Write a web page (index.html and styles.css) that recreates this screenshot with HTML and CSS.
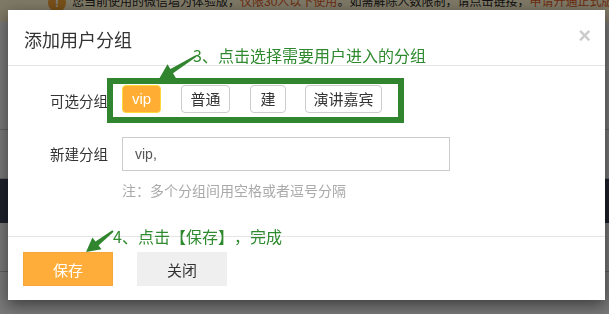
FILE: index.html
```html
<!DOCTYPE html>
<html lang="zh-CN">
<head>
    <meta charset="UTF-8">
    <meta name="viewport" content="width=device-width, initial-scale=1.0">
    <title>添加用户分组</title>
    <link rel="stylesheet" href="styles.css">
</head>
<body>
    <!-- Page behind the dialog -->
    <div class="page">
        <div class="notice">
            <span class="notice-icon">!</span>您当前使用的微信墙为体验版，<span class="red">仅限30人以下使用</span>。如需解除人数限制，请点击链接，<span class="red">申请开通正式版</span>
        </div>
        <div class="page-row"></div>
        <div class="page-row tall"></div>
        <div class="page-nav"></div>
        <div class="page-row low"></div>
    </div>

    <!-- Add group dialog -->
    <div class="overlay">
        <div class="modal">
            <div class="modal-header">
                <h4>添加用户分组</h4>
                <span class="close">&times;</span>
            </div>
            <div class="modal-body">
                <div class="form-row">
                    <label>可选分组</label>
                    <div class="tag-box">
                        <span class="tag active">vip</span>
                        <span class="tag tag-2">普通</span>
                        <span class="tag tag-1">建</span>
                        <span class="tag tag-4">演讲嘉宾</span>
                    </div>
                </div>
                <div class="form-row">
                    <label>新建分组</label>
                    <div>
                        <input type="text" class="group-input" value="vip,">
                        <p class="hint">注：多个分组间用空格或者逗号分隔</p>
                    </div>
                </div>
            </div>
            <div class="modal-footer">
                <button class="btn-save">保存</button>
                <button class="btn-close">关闭</button>
            </div>

            <!-- Tutorial annotations -->
            <div class="tip tip-select">3、点击选择需要用户进入的分组</div>
            <div class="tip tip-save">4、点击【保存】，完成</div>
            <svg class="arrows" width="597" height="290" viewBox="0 0 597 290">
                <polygon points="188.5,46.8 165,63.2 167.9,67.9 151,69 159.5,54.3 162.4,59 187.5,45.2" />
                <polygon points="105.6,221.8 90.5,235.4 93.6,239.3 78,242 84.4,227.5 87.5,231.4 104.4,220.2" />
            </svg>
        </div>
    </div>
</body>
</html>
```

FILE: styles.css
```css
body {
    margin: 0;
    font-family: "Liberation Sans", "Noto Sans CJK SC", sans-serif;
    background-color: #f2f2f2;
    color: #333;
    overflow: hidden;
    text-spacing-trim: space-all;
}
.page {
    height: 314px;
}
.notice {
    margin-top: -10px;
    padding: 0 0 8px 48px;
    line-height: 24px;
    font-size: 12px;
    color: #222;
    background-color: #fdf1cc;
    white-space: nowrap;
}
.notice .red {
    color: #d8561c;
}
.notice-icon {
    display: inline-block;
    width: 18px;
    height: 18px;
    margin-right: 6px;
    border-radius: 50%;
    background-color: #f0a030;
    color: #fff;
    font-weight: bold;
    text-align: center;
    line-height: 18px;
    vertical-align: middle;
}
.page-row {
    height: 107px;
    border-bottom: 1px solid #c4c4c4;
}
.page-row.tall {
    height: 48px;
}
.page-nav {
    height: 44px;
    background-color: #3a4256;
}
.page-row.low {
    height: 48px;
    border-bottom: 1px solid #bbb;
}
.overlay {
    position: fixed;
    top: 0;
    left: 0;
    width: 100%;
    height: 100%;
    padding: 10px 0 0 8px;
    box-sizing: border-box;
    background-color: rgba(0, 0, 0, 0.5);
}
.modal {
    position: relative;
    width: 597px;
    height: 290px;
    background-color: #fff;
    box-shadow: 0 5px 15px rgba(0, 0, 0, 0.5);
    font-family: "Noto Sans CJK SC", sans-serif;
}
.modal-header {
    display: flex;
    align-items: center;
    justify-content: space-between;
    height: 55px;
    padding: 0 14px 0 16px;
    border-bottom: 1px solid #e5e5e5;
}
.modal-header h4 {
    margin: 0;
    padding-top: 2px;
    font-size: 18px;
    font-weight: normal;
    color: #333;
}
.close {
    align-self: flex-start;
    margin-top: 15px;
    font-family: "Liberation Sans", sans-serif;
    font-size: 22px;
    font-weight: bold;
    color: #000;
    opacity: 0.2;
    line-height: 1;
}
.modal-body {
    padding: 12px 0 36px 42px;
    font-size: 14px;
}
.form-row {
    display: grid;
    grid-template-columns: 72px auto;
    align-items: start;
}
.form-row + .form-row {
    margin-top: 13px;
}
.form-row label {
    line-height: 46px;
    font-size: 14.5px;
    color: #333;
}
.form-row + .form-row label {
    line-height: 34px;
}
.tag-box {
    justify-self: start;
    display: flex;
    gap: 20px;
    margin-left: -15px;
    padding: 1px 16px 4px 9px;
    border: 6px solid #31852f;
}
.tag {
    box-sizing: border-box;
    height: 28px;
    border: 1px solid #ccc;
    border-radius: 4px;
    line-height: 26px;
    font-size: 15px;
    text-align: center;
    color: #333;
    background-color: #fff;
}
.tag.active {
    width: 39px;
    font-family: "Liberation Sans", sans-serif;
    color: #fff;
    background-color: #ffad33;
    border-color: #ffd83a;
}
.tag-1 {
    width: 36px;
}
.tag-2 {
    width: 49px;
}
.tag-4 {
    width: 77px;
    margin-left: -1px;
}
.group-input {
    display: block;
    width: 328px;
    height: 34px;
    margin: 0;
    padding: 0 12px;
    box-sizing: border-box;
    border: 1px solid #ccc;
    font-family: "Liberation Sans", sans-serif;
    font-size: 14px;
    color: #555;
}
.hint {
    margin: 9px 0 0;
    line-height: 20px;
    color: #aaa;
}
.modal-footer {
    display: flex;
    gap: 24px;
    padding: 15px 15px 14px;
    border-top: 1px solid #e5e5e5;
}
.modal-footer button {
    width: 90px;
    height: 34px;
    border: 1px solid #efefef;
    font-family: "Noto Sans CJK SC", sans-serif;
    font-size: 15px;
    cursor: pointer;
}
.btn-save {
    color: #fff;
    background-color: #ffad3a;
    border-color: #f4a73a !important;
}
.btn-close {
    color: #333;
    background-color: #efefef;
}
.tip {
    position: absolute;
    font-size: 16px;
    line-height: 20px;
    color: #2f8a2f;
    white-space: nowrap;
}
.tip-select {
    left: 185px;
    top: 35px;
}
.tip-save {
    left: 105px;
    top: 216px;
}
.arrows {
    position: absolute;
    top: 0;
    left: 0;
    fill: #31852f;
    pointer-events: none;
}
```
